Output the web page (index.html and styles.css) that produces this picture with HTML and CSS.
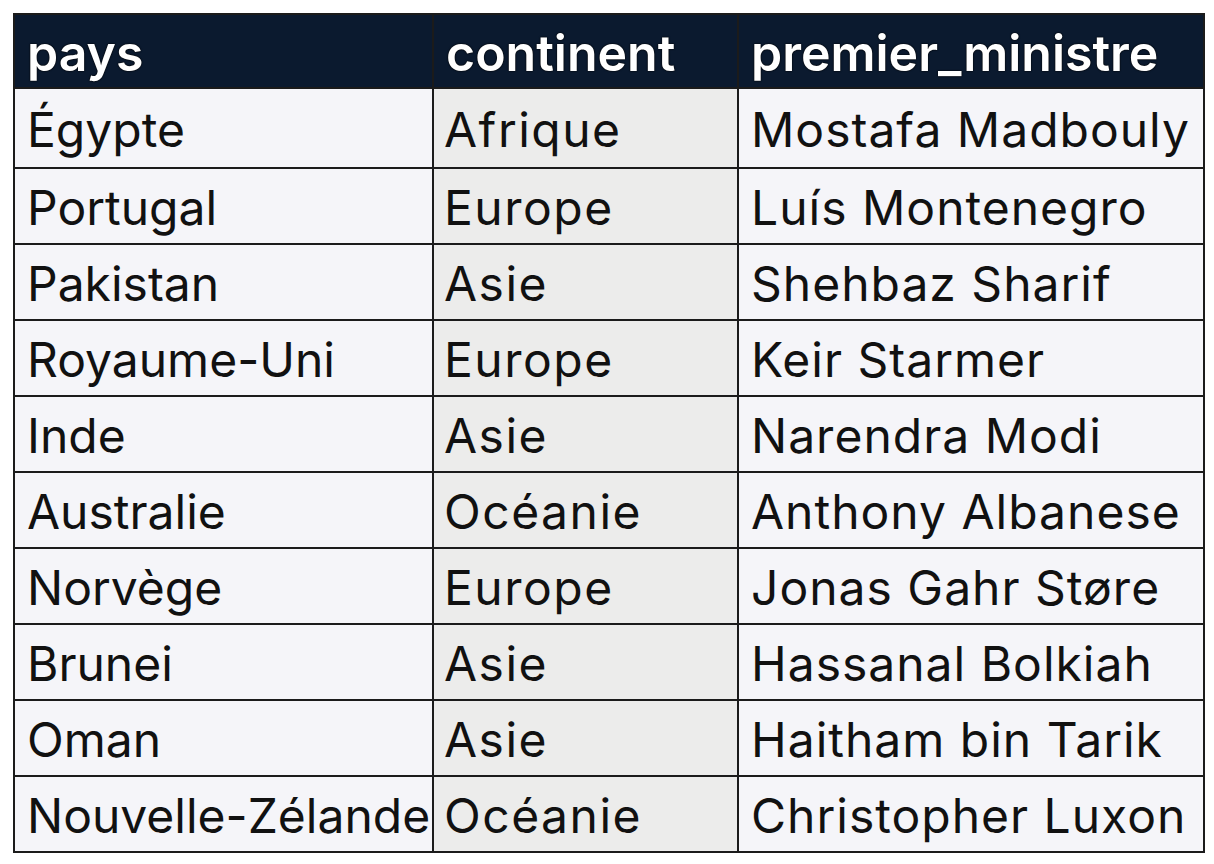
FILE: index.html
```html
<!DOCTYPE html>
<html lang="fr">
<head>
<meta charset="utf-8">
<title>Premiers ministres</title>
<link rel="stylesheet" href="styles.css">
</head>
<body>
<table class="data">
  <colgroup>
    <col class="c1"><col class="c2"><col class="c3">
  </colgroup>
  <thead>
    <tr><th>pays</th><th>continent</th><th>premier_ministre</th></tr>
  </thead>
  <tbody>
    <tr class="first"><td>Égypte</td><td>Afrique</td><td>Mostafa Madbouly</td></tr>
    <tr><td>Portugal</td><td>Europe</td><td>Luís Montenegro</td></tr>
    <tr><td>Pakistan</td><td>Asie</td><td>Shehbaz Sharif</td></tr>
    <tr><td>Royaume-Uni</td><td>Europe</td><td>Keir Starmer</td></tr>
    <tr><td>Inde</td><td>Asie</td><td>Narendra Modi</td></tr>
    <tr><td>Australie</td><td>Océanie</td><td>Anthony Albanese</td></tr>
    <tr><td>Norvège</td><td>Europe</td><td>Jonas Gahr Støre</td></tr>
    <tr><td>Brunei</td><td>Asie</td><td>Hassanal Bolkiah</td></tr>
    <tr><td>Oman</td><td>Asie</td><td>Haitham bin Tarik</td></tr>
    <tr><td>Nouvelle-Zélande</td><td>Océanie</td><td>Christopher Luxon</td></tr>
  </tbody>
</table>
</body>
</html>
```
FILE: styles.css
```css
html, body {
  margin: 0;
  padding: 0;
  background: #ffffff;
}
body {
  padding: 13px 0 0 13px;
  font-family: Inter, "Liberation Sans", sans-serif;
}
.data {
  border-collapse: collapse;
  table-layout: fixed;
  width: 1190px;
  border: 2px solid #1b1b1b;
}
.c1 { width: 419px; }
.c2 { width: 305px; }
.c3 { width: 466px; }
.data th, .data td {
  border: 2px solid #1b1b1b;
  text-align: left;
  vertical-align: middle;
  white-space: nowrap;
  overflow: hidden;
  font-size: 48px;
  line-height: 58px;
  padding: 4px 0 0 12px;
  color: #111111;
}
.data th {
  height: 69px;
  padding-top: 3px;
  padding-bottom: 0;
  font-size: 50px;
  background: #0b1a2f;
  color: #ffffff;
  font-weight: 600;
  text-shadow: 0 0 2px #000000, 0 0 1px #000000;
}
.data td {
  height: 70px;
  background: #f5f5f9;
  font-weight: 400;
}
.data tr.first td {
  height: 74px;
}
.data td:nth-child(2) {
  background: #ececeb;
  padding-left: 10px;
  letter-spacing: 1.5px;
}
.data td:nth-child(3) {
  letter-spacing: 1px;
}
```
